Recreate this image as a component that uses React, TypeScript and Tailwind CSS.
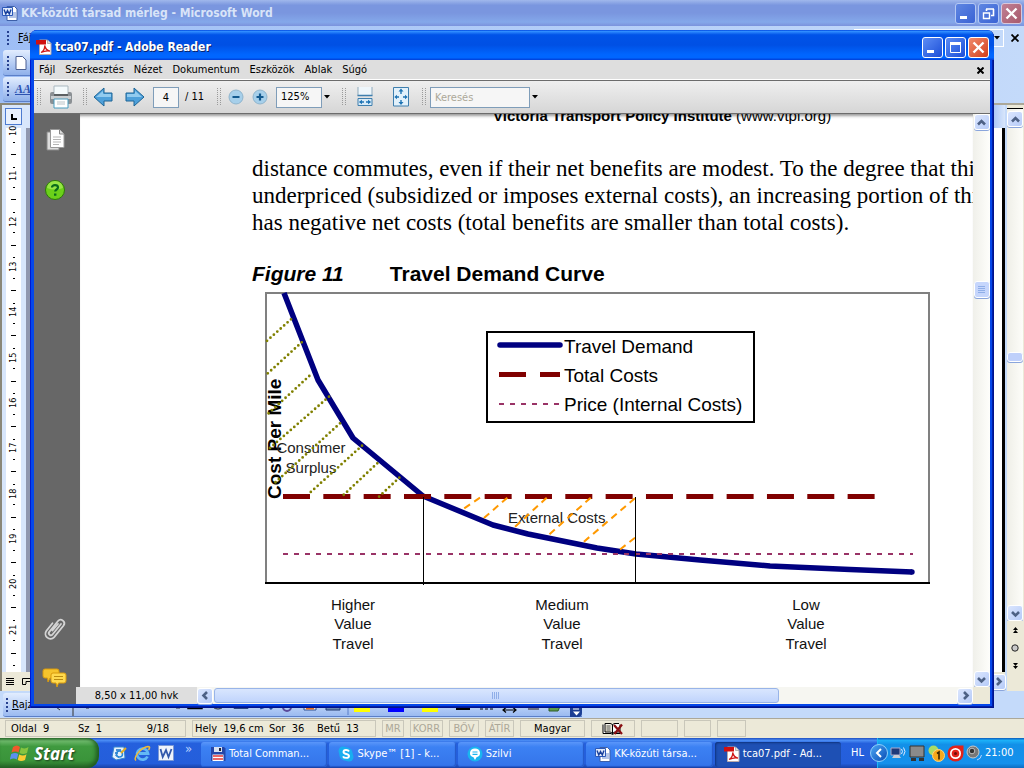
import React from "react";

const UI = "font-['DejaVu_Sans_Condensed','Liberation_Sans',sans-serif]";

type Dir = "up" | "down" | "left" | "right";

const chevrons: Record<Dir, string> = {
  up: "M4 9.5 7.5 6 11 9.5",
  down: "M4 6 7.5 9.5 11 6",
  left: "M9 4 5.5 7.5 9 11",
  right: "M6 4 9.5 7.5 6 11",
};

function ScrollButton({ dir, label }: { dir: Dir; label: string }) {
  return (
    <button
      aria-label={label}
      className="flex size-4 shrink-0 items-center justify-center rounded-[3px] border border-white bg-linear-to-br from-[#dbe6fe] to-[#b6cbf8] shadow-[0_1px_0_#8aa5dc]"
    >
      <svg viewBox="0 0 15 15" className="size-[15px] shrink-0" fill="none" stroke="#4d6185" strokeWidth="2.6">
        <path d={chevrons[dir]} />
      </svg>
    </button>
  );
}

function Grip() {
  return (
    <svg viewBox="0 0 4 18" className="h-[18px] w-1 shrink-0" stroke="#9a9a9a" strokeDasharray="1 1">
      <path d="M.5 0V18M3.5 0V18" />
    </svg>
  );
}

function Caret() {
  return (
    <svg viewBox="0 0 6 4" className="h-1 w-1.5">
      <path d="M0 0h6L3 3.5Z" fill="#000" />
    </svg>
  );
}

function CaptionButton({ kind, dim }: { kind: "min" | "max" | "restore" | "close"; dim?: boolean }) {
  const close = kind === "close";
  const tone = close
    ? dim
      ? "from-[#c08095] to-[#a85a6c] border-[#d8c8dc]"
      : "from-[#f08a6c] to-[#d23c12] border-white"
    : dim
      ? "from-[#5f86e2] to-[#3a62d4] border-[#b4c8f4]"
      : "from-[#5d8cf4] to-[#1c4cd8] border-white";
  const names = { min: "Minimize", max: "Maximize", restore: "Restore", close: "Close" };
  return (
    <button aria-label={names[kind]} className={`size-[21px] shrink-0 rounded-[3px] border bg-linear-to-br ${tone}`}>
      <svg viewBox="0 0 19 19" className="size-[19px]" fill="none" stroke="#fff">
        {kind === "min" && <path d="M4 13.5h7" strokeWidth="3" />}
        {kind === "max" && (
          <>
            <path d="M4.5 5.5h10v9h-10z" />
            <path d="M4 5.5h11" strokeWidth="3" />
          </>
        )}
        {kind === "restore" && (
          <>
            <path d="M7 5h8M14.5 5v6.5H12M7.5 5v2" strokeWidth="1.6" />
            <path d="M4.5 9h6v5.5h-6z" strokeWidth="1.4" />
          </>
        )}
        {close && <path d="M4.5 4.5l10 10M14.5 4.5l-10 10" strokeWidth="2.4" />}
      </svg>
    </button>
  );
}

function WordIcon() {
  return (
    <svg viewBox="0 0 16 16" className="size-4 shrink-0">
      <path d="M5 1.5h7.5l2.5 2.500V15.500H5z" fill="#fff" stroke="#3d5fa8" />
      <path d="M10 8h4M10 10h4M7 12h7" stroke="#6b8bd0" />
      <path d="M.5 2.500h10v8H.5z" fill="#dfe9fb" stroke="#2b58b8" />
      <path d="M2 4.500 3.800 9 5.500 5.500 7.300 9 9 4.500" fill="none" stroke="#173f9c" strokeWidth="1.400" />
    </svg>
  );
}

function PdfIcon() {
  return (
    <svg viewBox="0 0 16 16" className="size-4 shrink-0">
      <path d="M3.500 1h8L15 4.500V15.500H3.500z" fill="#fff" stroke="#b9a9a9" />
      <path d="M11.500 1v3.500H15" fill="#ddd" stroke="#999" strokeWidth=".7" />
      <path d="M0 1h10v4.500H0z" fill="#d01010" />
      <path d="M5 13.500c3-1.500 4-5 3.700-7 .6 3 3 5.300 5.300 5.600-3-.6-6 0-9 1.400Z" fill="none" stroke="#d01818" strokeWidth="1.300" />
    </svg>
  );
}

function AdobeToolbar() {
  return (
    <div className="flex h-[33px] items-center border-b border-[#6c6c6c] bg-linear-to-b from-[#efefef] to-[#d6d6d6] pl-[3px]">
      <Grip />
      <button aria-label="Nyomtatás" className="ml-2 w-6">
        <svg viewBox="0 0 24 24" className="size-6">
          <path d="M5 1h14v9H5z" fill="#f4fafc" stroke="#a9b7bf" />
          <path d="M1 9q0-2 2-2h2v3h14V7h2q2 0 2 2v8q0 2-2 2H3q-2 0-2-2z" fill="#8b9094" />
          <path d="M2 11h20v3H2z" fill="#c9cdd0" />
          <path d="M5 10h14" stroke="#5b6063" strokeWidth="2" />
          <path d="M5 14h14v9H5z" fill="#fff" stroke="#4b9cbf" />
          <path d="M8 17h8M8 19h8" stroke="#b9c2c6" />
        </svg>
      </button>
      <span className="w-2.5" />
      <Grip />
      <button aria-label="Előző oldal" className="ml-1.5 w-5">
        <svg viewBox="0 0 20 20" className="size-5">
          <path d="M1 10 11 1v5h8v8h-8v5z" fill="#4ea0da" stroke="#1d6496" />
          <path d="M3 10 10 4v3h8v3z" fill="#92cbef" />
        </svg>
      </button>
      <button aria-label="Következő oldal" className="ml-3 w-5">
        <svg viewBox="0 0 20 20" className="size-5">
          <path d="M19 10 9 1v5H1v8h8v5z" fill="#4ea0da" stroke="#1d6496" />
          <path d="M17 10 10 4v3H2v3z" fill="#92cbef" />
        </svg>
      </button>
      <input
        aria-label="Oldalszám"
        defaultValue="4"
        className="ml-2 h-[21px] w-[26px] border border-[#7f9db9] bg-[#f6f6f6] text-center"
      />
      <span className="ml-1.5 w-[26px] whitespace-pre">/ 11</span>
      <span className="w-1.5" />
      <Grip />
      <button aria-label="Kicsinyítés" className="ml-[7px] w-4">
        <svg viewBox="0 0 16 16" className="size-4">
          <circle cx="8" cy="8" r="7" fill="#a6cfea" stroke="#8fb4cc" />
          <path d="M4.500 8h7" stroke="#12598e" strokeWidth="2.200" />
        </svg>
      </button>
      <button aria-label="Nagyítás" className="ml-2 w-4">
        <svg viewBox="0 0 16 16" className="size-4">
          <circle cx="8" cy="8" r="7" fill="#a6cfea" stroke="#8fb4cc" />
          <path d="M4.500 8h7M8 4.500v7" stroke="#12598e" strokeWidth="2.200" />
        </svg>
      </button>
      <select
        aria-label="Nagyítás mértéke"
        className="ml-2 h-[21px] w-[46px] appearance-none border border-[#7f9db9] bg-[#f6f6f6] pl-1"
      >
        <option>125%</option>
      </select>
      <span className="ml-0.5 flex w-2"><Caret /></span>
      <span className="w-2.5" />
      <Grip />
      <button aria-label="Szélességhez igazítás" className="ml-2.5 w-[18px]">
        <svg viewBox="0 0 18 20" className="h-5 w-[18px]">
          <path d="M2 0v8.500h14V0" fill="#eef6fb" stroke="#8fa9bb" />
          <path d="M1.500 8.500h15" stroke="#3f7fae" strokeWidth="1.500" />
          <path d="M2 11.500h14v7H2z" fill="#d8ebf8" stroke="#3f7fae" />
          <path d="M4 15h4M10 15h4" stroke="#1f74b4" strokeWidth="1.400" />
          <path d="M2.800 15 6 12.700v4.600zM15.200 15 12 12.700v4.600z" fill="#1f74b4" />
        </svg>
      </button>
      <button aria-label="Teljes oldal" className="ml-[18px] w-[18px]">
        <svg viewBox="0 0 18 20" className="h-5 w-[18px]">
          <path d="M1.500.5h15v18.500h-15z" fill="#e2f1fb" stroke="#3f7fae" />
          <path d="M9 4v3M9 13v3M4 10h3M11 10h3" stroke="#1f74b4" strokeWidth="1.400" />
          <path d="M9 1.500 11.500 4.500h-5zM9 18l2.500-3h-5zM2.300 10 5 7.700v4.600zM15.700 10 13 7.700v4.600z" fill="#1f74b4" />
        </svg>
      </button>
      <span className="w-3" />
      <Grip />
      <input
        aria-label="Keresés"
        placeholder="Keresés"
        className="ml-1 h-[21px] w-[100px] border border-[#7f9db9] bg-[#f6f6f6] px-1 placeholder:text-[#aca899]"
      />
      <button aria-label="Keresési beállítások" className="ml-0.5"><Caret /></button>
    </div>
  );
}

const hatch = [
  [266, 341.7, 291, 319.3], [266, 375, 301.7, 342.3], [266, 415.7, 309.3, 376], [267.7, 450, 329, 396.7],
  [274.3, 483.3, 340, 423.3], [310, 492.7, 362, 445.7], [341.7, 496.7, 377.3, 463.3], [378.3, 497.3, 399.3, 477.7],
];
const external = [
  [461.7, 510, 480, 497.7], [481.7, 520, 507.3, 497.7], [512.7, 529, 546.7, 497.7], [546.7, 536.7, 590.7, 497.7],
  [582.7, 542.7, 635, 498.3], [619.3, 550, 635, 537.7],
];
const categories = [
  { x: 353, level: "Higher" },
  { x: 562, level: "Medium" },
  { x: 806, level: "Low" },
];

function DemandChart() {
  return (
    <svg
      viewBox="252 286 680 370"
      className="block h-[370px] w-[680px] font-['Liberation_Sans',Arial,sans-serif]"
      fill="none"
      role="img"
      aria-label="Travel Demand Curve"
    >
      <path d="M266 583V293H929V583" stroke="#808080" strokeWidth="2" />
      <g fill="#000">
        <text transform="translate(281 499) rotate(-90)" fontSize="19" fontWeight="700">Cost Per Mile</text>
        <g fontSize="15" fill="#222">
          <text x="311" y="453" textAnchor="middle">Consumer</text>
          <text x="311" y="473" textAnchor="middle">Surplus</text>
          <text x="508" y="523">External Costs</text>
        </g>
      </g>
      <path
        d="M284 293 318 380 353 438 423 496 493 525 528 534 597 548 636 554 700 560 770 566 850 569.500 912 572"
        stroke="#000080"
        strokeWidth="5.500"
        strokeLinejoin="round"
      />
      <circle cx="912" cy="572" r="2.700" fill="#000080" />
      <path d="M283 496.500H875" stroke="#800000" strokeWidth="5" strokeDasharray="27 13.330" />
      <path d="M283 554H913" stroke="#993366" strokeWidth="2" strokeDasharray="5 6" />
      <g stroke="#808000" strokeWidth="2.800" strokeLinecap="round" strokeDasharray="0 4.600">
        {hatch.map(([a, b, c, d]) => <path key={b} d={`M${c} ${d} ${a} ${b}`} />)}
      </g>
      <g stroke="#ff9900" strokeWidth="2" strokeDasharray="7 5">
        {external.map(([a, b, c, d]) => <path key={b} d={`M${c} ${d} ${a} ${b}`} />)}
      </g>
      <path d="M423.500 497V585M635.500 497V583" stroke="#000" />
      <path d="M265 583H930" stroke="#000" strokeWidth="2" />
      <path d="M487 332H754V422H487z" fill="#fff" stroke="#000" strokeWidth="2" />
      <path d="M500 345H560" stroke="#000080" strokeWidth="5.500" strokeLinecap="round" />
      <path d="M499 374.500H560" stroke="#800000" strokeWidth="5" strokeDasharray="27 14" />
      <path d="M499 404H559" stroke="#993366" strokeWidth="2" strokeDasharray="5 6" />
      <g fill="#000" fontSize="19">
        <text x="564" y="353">Travel Demand</text>
        <text x="564" y="382">Total Costs</text>
        <text x="564" y="411">Price (Internal Costs)</text>
      </g>
      <g fill="#111" fontSize="15" textAnchor="middle">
        {categories.map(({ x, level }) => (
          <g key={level}>
            <text x={x} y="610">{level}</text>
            <text x={x} y="629">Value</text>
            <text x={x} y="649">Travel</text>
          </g>
        ))}
      </g>
    </svg>
  );
}

function AdobeSidebar() {
  return (
    <nav className="flex w-[42px] shrink-0 flex-col items-center bg-[#676767] pt-3.5">
      <button aria-label="Oldalak" className="w-6">
        <svg viewBox="0 0 24 24" className="size-6">
          <path d="M4 4h12v18H4z" fill="#ddd" stroke="#888" />
          <path d="M7.500 1.500h9L21 6v13.500H7.500z" fill="#fff" stroke="#999" />
          <path d="M16.500 1.500V6H21" fill="#ddd" stroke="#888" />
          <path d="M10 9h8M10 11.500h8M10 14h8M10 16.500h6" stroke="#b5b5b5" />
        </svg>
      </button>
      <button aria-label="Súgó" className="mt-[26px] w-6">
        <svg viewBox="0 0 24 24" className="size-6">
          <circle cx="12" cy="12" r="9.500" fill="#6bd01a" stroke="#2c7a08" />
          <path d="M4 10a8 7 0 0 1 16 0q-8 3-16 0Z" fill="#a9ee58" opacity=".7" />
          <path d="M9 9.500q0-2.300 3-2.300t3 2.300c0 2-2.800 2-2.800 4" fill="none" stroke="#0a6a1c" strokeWidth="2.200" />
          <path d="M11 15.500h2.400v2.200H11z" fill="#0a6a1c" />
        </svg>
      </button>
      <div className="grow" />
      <button aria-label="Mellékletek" className="w-6">
        <svg viewBox="0 0 24 28" className="h-7 w-6" fill="none" stroke="#d4d4d4" strokeWidth="1.800" strokeLinecap="round">
          <path d="M18 9 9.500 19.500a2 2 0 0 1-3.200-2.600L15 6a3.600 3.600 0 0 1 5.600 4.500L11 22.300A5 5 0 0 1 3.300 16l6.200-7.800M9.500 15.500 15 9" />
        </svg>
      </button>
      <button aria-label="Megjegyzések" className="mt-6 mb-[15px] w-[26px]">
        <svg viewBox="0 0 26 22" className="h-[22px] w-[26px]" fill="#f6c42c" stroke="#d99a0c">
          <path d="M3 2h12q2 0 2 2v5q0 2-2 2H8l-2 4-.5-4H3q-2 0-2-2V4q0-2 2-2Z" />
          <path d="M11 6h11q2 0 2 2v6q0 2-2 2h-5.500L15 20l-1-4h-3q-2 0-2-2V8q0-2 2-2Z" fill="#ffd94e" />
          <path d="M12 9.500h9M12 12.500h9" stroke="#b98a10" />
        </svg>
      </button>
    </nav>
  );
}

function AdobeWindow() {
  const menu = ["Fájl", "Szerkesztés", "Nézet", "Dokumentum", "Eszközök", "Ablak", "Súgó"];
  return (
    <section className="absolute inset-x-[30px] top-[30px] bottom-[30px] flex flex-col overflow-hidden rounded-t-[7px] bg-[#0547ea] px-1 pb-1 shadow-[inset_1px_0_0_#0019cf,inset_-1px_-1px_0_#00138c,inset_-2px_-2px_0_#001ea8]">
      <header className="-mx-1 flex h-[30px] shrink-0 items-center gap-[3px] rounded-t-[7px] bg-[linear-gradient(180deg,#0048e0,#2f8cff_5%,#0053e8_16%,#0050e4_50%,#0066ff_82%,#0066ff_92%,#003dd7)] pr-[5px] pl-1.5 pt-1">
        <PdfIcon />
        <h1 className="grow text-[12px] font-bold text-white [text-shadow:1px_1px_#0a246a]">tca07.pdf - Adobe Reader</h1>
        <div className="flex gap-0.5">
          <CaptionButton kind="min" />
          <CaptionButton kind="max" />
          <CaptionButton kind="close" />
        </div>
      </header>
      <div className="flex h-[21px] shrink-0 items-center border-b border-[#6c6c6c] bg-[#dedede] pr-1.5 pl-[5px] shadow-[inset_0_-1px_0_#fff]">
        <nav className="flex grow gap-2.5">
          {menu.map((m) => <button key={m}>{m}</button>)}
        </nav>
        <button aria-label="Bezárás">
          <svg viewBox="0 0 7 7" className="size-[7px]" stroke="#000" strokeWidth="2"><path d="m.5.5 6 6M6.500.5l-6 6" /></svg>
        </button>
      </div>
      <AdobeToolbar />
      <div className="flex min-h-0 grow">
        <AdobeSidebar />
        <div className="flex min-w-0 grow flex-col">
          <div className="flex min-h-0 grow">
            <article className="min-w-0 grow overflow-hidden border-l-4 border-[#676767] bg-white pl-[172px] whitespace-nowrap text-black shadow-[inset_0_4px_3px_-2px_#999]">
              <p className="-mt-[7px] pl-[241px] font-['Liberation_Sans',Arial,sans-serif] text-[15px] leading-[17px]">
                <b>Victoria Transport Policy Institute</b> (www.vtpi.org)
              </p>
              <p className="mt-[31px] font-['Liberation_Serif','Times_New_Roman',serif] text-[23px] leading-[27px]">
                distance commutes, even if their net benefits are modest. To the degree that this travel is<br />
                underpriced (subsidized or imposes external costs), an increasing portion of this travel<br />
                has negative net costs (total benefits are smaller than total costs).
              </p>
              <h2 className="mt-[26px] flex gap-[46px] font-['Liberation_Sans',Arial,sans-serif] text-[21px] leading-6 font-bold">
                <i>Figure 11</i>
                <span>Travel Demand Curve</span>
              </h2>
              <DemandChart />
            </article>
            <div className="flex w-[17px] shrink-0 flex-col items-center bg-linear-to-r from-[#f0f0ea] to-[#fefefb]">
              <ScrollButton dir="up" label="Fel" />
              <div className="grow-[151]" />
              <div className="flex h-[17px] w-4 items-center justify-center rounded-[3px] border border-white bg-[#c6d6fc] shadow-[0_1px_0_#8aa5dc]">
                <svg viewBox="0 0 8 8" className="size-2" stroke="#8faee8"><path d="M0 .5h7M0 2.500h7M0 4.500h7M0 6.500h7" /></svg>
              </div>
              <div className="grow-[373]" />
              <ScrollButton dir="down" label="Le" />
            </div>
          </div>
          <div className="flex h-[17px] shrink-0 items-center bg-[#f6f6f1]">
            <div className="h-full w-[121px] shrink-0 bg-[#dedede] text-center leading-[17px]">8,50 x 11,00 hvk</div>
            <ScrollButton dir="left" label="Balra" />
            <div className="ml-px flex h-[15px] grow-[563] items-center justify-center rounded-[3px] border border-[#98b4e8] bg-linear-to-b from-[#d9e6fe] to-[#c0d4fc]">
              <svg viewBox="0 0 8 8" className="size-2" stroke="#8faee8"><path d="M.5 0v7M2.500 0v7M4.500 0v7M6.500 0v7" /></svg>
            </div>
            <div className="grow-[181]" />
            <ScrollButton dir="right" label="Jobbra" />
            <div className="h-full w-[17px] bg-[#ece9d8]" />
          </div>
        </div>
      </div>
    </section>
  );
}

function WordRuler() {
  const numbers = [10, 11, 12, 13, 14, 15, 16, 17, 18, 19, 20, 21];
  return (
    <div className="flex w-[30px] shrink-0 flex-col border-t-2 border-l-2 border-[#8a8778] bg-[#d8e6fb]">
      <div className="flex h-[23px] shrink-0 items-center pl-[3px]">
        <div className="flex size-[17px] items-center justify-center border border-[#4d7bd0] bg-[#eaf1fd]">
          <svg viewBox="0 0 8 8" className="size-2" stroke="#000" strokeWidth="2" fill="none"><path d="M2 1v5h5" /></svg>
        </div>
      </div>
      <div className="flex min-h-0 grow">
        <div className="ml-1 flex w-[15px] flex-col bg-white">
          {numbers.map((n) => (
            <div key={n} className="flex grow flex-col items-center">
              <span className="flex h-2 rotate-180 items-center text-[9px] leading-none [writing-mode:vertical-rl]">{n}</span>
              <i className="my-auto h-px w-0.5 bg-black" />
              <i className="my-auto h-px w-[5px] bg-black" />
              <i className="my-auto h-px w-0.5 bg-black" />
            </div>
          ))}
        </div>
        <div className="ml-[5px] w-1 bg-[#9097ae]" />
      </div>
      <div className="flex h-[19px] shrink-0 items-center gap-2 overflow-hidden bg-[#ece9d8] pl-1">
        <svg viewBox="0 0 8 8" className="size-2 shrink-0" stroke="#000"><path d="M0 .5h8M0 2.500h8M0 4.500h8M0 6.500h8" /></svg>
        <svg viewBox="0 0 10 8" className="h-2 w-2.5 shrink-0" fill="none" stroke="#000"><path d="M8 .5H.5v6H4M4 6V3.500h5" /></svg>
      </div>
    </div>
  );
}

function WordRightEdge() {
  return (
    <div className="flex w-[34px] shrink-0 border-t-2 border-[#aca899]">
      <div className="flex w-[15px] flex-col">
        <div className="h-[23px] bg-linear-to-r from-[#9ebef5] to-[#d8e6fb]" />
        <div className="grow border-r-[3px] border-black bg-white" />
        <div className="flex h-[19px] items-center bg-[#ece9d8]"><ScrollButton dir="right" label="Jobbra" /></div>
      </div>
      <div className="ml-0.5 flex grow flex-col items-center bg-linear-to-r from-[#efefe8] to-[#fdfdf9]">
        <div className="mb-0.5 h-1 w-4 border-b border-black bg-[#ece9d8]" />
        <ScrollButton dir="up" label="Fel" />
        <div className="grow-[225]" />
        <div className="h-[10px] w-4 rounded-[3px] border border-white bg-[#bfd0fb] shadow-[0_1px_0_#8aa5dc]" />
        <div className="grow-[243]" />
        <ScrollButton dir="down" label="Le" />
        <div className="flex h-[70px] w-full flex-col items-center gap-2.5 bg-[#ece9d8] pt-1.5">
          <svg viewBox="0 0 7 7" className="size-[7px]"><path d="M3.500 0 6 3H1zM3.500 3 6 6H1z" /></svg>
          <svg viewBox="0 0 8 8" className="size-2"><circle cx="4" cy="4" r="3.200" fill="#c9c9c9" stroke="#222" /></svg>
          <svg viewBox="0 0 7 7" className="size-[7px]"><path d="M3.500 4 6 1H1zM3.500 7 6 4H1z" /></svg>
        </div>
      </div>
      <div className="w-0.5 bg-[#ece9d8]" />
    </div>
  );
}

function DotHandle() {
  return (
    <svg viewBox="0 0 3 14" className="h-3.5 w-[3px] shrink-0" fill="#27418f">
      <path d="M0 0h2v2H0zM0 4h2v2H0zM0 8h2v2H0zM0 12h2v2H0z" />
    </svg>
  );
}

function StatusCell({ width, children, muted }: { width: string; children?: React.ReactNode; muted?: boolean }) {
  return (
    <div className={`flex h-[17px] shrink-0 items-center justify-center border border-[#c9c7ba] ${width} ${muted ? "text-[#aca899]" : ""}`}>
      {children}
    </div>
  );
}

function WordWindow() {
  return (
    <section className="relative flex min-h-0 grow flex-col bg-[#c4dafa]">
      <header className="flex h-[26px] shrink-0 items-center gap-[3px] bg-[linear-gradient(180deg,#a0b8ec,#7a96df_20%,#7a96df_50%,#84a8ea_85%,#7b92dc)] pr-0.5 pl-0.5">
        <WordIcon />
        <h1 className="grow text-[12px] font-bold text-[#d8e4f8]">KK-közúti társad mérleg - Microsoft Word</h1>
        <div className="flex gap-0.5">
          <CaptionButton kind="min" dim />
          <CaptionButton kind="restore" dim />
          <CaptionButton kind="close" dim />
        </div>
      </header>
      <div className="flex h-6 shrink-0 items-center bg-linear-to-r from-[#9ebef5] to-[#c4dafa] pr-[5px] pl-[7px]">
        <DotHandle />
        <button className="ml-2"><u>F</u>ájl</button>
        <div className="grow" />
        <div className="mr-[7px] flex h-[18px] w-[150px] items-center justify-end border border-white bg-[#c4dafa] pr-[3px]"><Caret /></div>
        <svg viewBox="0 0 8 8" className="size-2" stroke="#000" strokeWidth="1.800"><path d="m.5.5 7 7M7.500.5l-7 7" /></svg>
      </div>
      <div className="flex h-[53px] shrink-0 flex-col gap-px bg-linear-to-r from-[#9ebef5] to-[#c4dafa] pl-[3px]">
        <div className="flex h-[26px] w-3/4 items-center gap-[5px] rounded-l-[3px] border-b border-[#5b7fc8] bg-linear-to-b from-[#e2edfe] to-[#8fb0ea] pl-1">
          <DotHandle />
          <svg viewBox="0 0 12 14" className="h-3.5 w-3"><path d="M1 .5h6.500L11 4v9.500H1z" fill="#fff" stroke="#4b5f92" /></svg>
        </div>
        <div className="flex h-[25px] w-3/4 items-center gap-[5px] rounded-l-[3px] border-b border-[#5b7fc8] bg-linear-to-b from-[#e2edfe] to-[#8fb0ea] pl-1">
          <DotHandle />
          <span className="font-['Liberation_Serif',serif] text-[12px] font-bold text-[#2c52b0] italic underline">AA</span>
        </div>
      </div>
      <div className="flex min-h-0 grow">
        <WordRuler />
        <div className="grow bg-[#9097ae]" />
        <WordRightEdge />
      </div>
      <div className="h-7 shrink-0 border-b border-[#aca899] pt-0.5 pl-[3px]">
        <div className="flex h-[24px] w-[579px] items-center rounded-l-[3px] border-b border-[#5b7fc8] bg-linear-to-b from-[#e2edfe] to-[#9bbaf0] pl-[3px]">
          <DotHandle />
          <span className="ml-[3px] w-9"><u>R</u>ajz</span>
          <svg viewBox="48 0 534 24" className="h-6 w-[534px] shrink-0" fill="none">
            <path d="M56 14l4 3M73 10v13M86 15h3M152 14h3M176 15h4" stroke="#333" />
            <path d="M188 4h14v11.500h-14z" stroke="#000" strokeWidth="1.500" />
            <ellipse cx="218" cy="10" rx="7" ry="6" stroke="#222" />
            <path d="M234 4h14v11.500h-14z" stroke="#2b4680" />
            <path d="M260 15l8-3 4 4" stroke="#1d49a0" strokeWidth="3" />
            <circle cx="287" cy="14" r="4" stroke="#5a4a9a" strokeWidth="2" />
            <path d="M304 4h12v13h-12z" fill="#e8e8f4" stroke="#305090" />
            <path d="M306 15h8" stroke="#e87020" strokeWidth="3" />
            <path d="M326 4h14v13h-14z" fill="#6a86b0" stroke="#223a70" />
            <path d="M348 2v20" stroke="#5b7fc8" />
            <path d="M354 15.500h16M422 15.500h16" stroke="#ff0" strokeWidth="7" />
            <path d="M388 15.500h16" stroke="#00f" strokeWidth="7" />
            <path d="M456 16h14" stroke="#000" strokeWidth="2" />
            <path d="M480 16h14" stroke="#000" strokeDasharray="3 2" />
            <path d="M503 17h13M506 14.500 503 17l3 2.500M513 14.500l3 2.500-3 2.500" stroke="#000" strokeWidth="1.200" />
            <path d="M528 15h11" stroke="#6d7288" strokeWidth="4" />
            <path d="M549 11h12l-3 7h-9z" fill="#5f9c4c" stroke="#2d5c28" />
            <path d="M570 0h8q4 0 4 4v16q0 4-4 4h-8z" fill="#1d3f94" />
            <path d="M573 16h6" stroke="#fff" />
            <path d="M573 18.500h7l-3.500 4z" fill="#fff" />
          </svg>
        </div>
      </div>
      <footer className="flex h-[19px] shrink-0 items-center gap-1.5 bg-[#ece9d8] pl-[5px]">
        <div className="flex h-[17px] w-[181px] shrink-0 items-center border border-[#c9c7ba] px-[5px] whitespace-pre">
          <span className="w-[67px]">Oldal  9</span>
          <span className="grow">Sz  1</span>
          <span className="mr-[11px]">9/18</span>
        </div>
        <div className="flex h-[17px] w-[184px] shrink-0 items-center gap-2 border border-[#c9c7ba] pl-0.5 whitespace-pre">
          <span className="w-[66px]">Hely  19,6 cm</span>
          <span className="w-10">Sor  36</span>
          <span>Betű  13</span>
        </div>
        <StatusCell width="w-[22px]" muted>MR</StatusCell>
        <StatusCell width="w-[33px]" muted>KORR</StatusCell>
        <StatusCell width="w-[30px]" muted>BŐV</StatusCell>
        <StatusCell width="w-[29px]" muted>ÁTÍR</StatusCell>
        <StatusCell width="w-[65px]">Magyar</StatusCell>
        <StatusCell width="w-[44px]">
          <svg viewBox="0 0 22 14" className="h-3.5 w-[22px]" fill="none">
            <path d="M1 2.500v9h8l1.500 1 1.500-1h6v-9M3 1.500h5q2 0 2.500 1.500v8.500Q9.500 10 8 10H3zM17 1.500h-4q-2 0-2.500 1.500v8.500q1-1.500 2.500-1.500h4" fill="#fff" stroke="#000" />
            <path d="M4.500 4h4M4.500 6h4M4.500 8h4" stroke="#555" />
            <path d="m12 3 8 9M20 2.500 12.500 12" stroke="#8b0f12" strokeWidth="2.200" />
          </svg>
        </StatusCell>
        <StatusCell width="w-[37px]" />
        <StatusCell width="w-[27px]" />
        <StatusCell width="w-[29px]" />
      </footer>
      <AdobeWindow />
    </section>
  );
}

function TaskButton({ icon, label, active }: { icon: React.ReactNode; label: string; active?: boolean }) {
  return (
    <button
      className={`flex h-[25px] min-w-0 flex-1 items-center gap-[3px] rounded-[3px] pl-[9px] text-left whitespace-nowrap text-white ${
        active
          ? "bg-[#1e50b4] shadow-[inset_1px_1px_2px_#0f337e]"
          : "bg-linear-to-b from-[#5a96fa] via-[#3c81f3] via-20% to-[#3474ea] shadow-[inset_-1px_-1px_1px_#2458c8]"
      }`}
    >
      {icon}
      <span>{label}</span>
    </button>
  );
}

function Taskbar() {
  return (
    <footer className="flex h-[30px] shrink-0 items-center bg-[linear-gradient(180deg,#1f4fc0,#4a8cf4_8%,#2560dd_18%,#245edb_85%,#1941a5)]">
      <button className="flex h-full w-[99px] shrink-0 items-center gap-1 rounded-r-[12px] bg-[linear-gradient(180deg,#2f6f2f,#6cb86a_10%,#3f9a3f_28%,#3a943a_75%,#2a6b2a)] pl-2.5 shadow-[inset_-3px_-1px_4px_#1f5a20]">
        <svg viewBox="0 0 20 18" className="h-[18px] w-5">
          <path d="M3 3q4-3 7 0L8.500 8.500q-3-2-7 0z" fill="#f0592b" />
          <path d="M11 3.500q4 2 7.500-.5L17 9q-4 2-7.500 0z" fill="#86c440" />
          <path d="M1.200 10q4-2 7 0L6.800 15.500q-3-2-7 0z" fill="#5b90f0" />
          <path d="M9.200 10.500q4 2 7.300-.3L15 16q-4 2-7.300 0z" fill="#fbcb33" />
        </svg>
        <span className="font-['Open_Sans','Liberation_Sans',sans-serif] text-[17px] leading-none font-bold text-white italic [text-shadow:1px_1px_2px_#1a3a1a]">Start</span>
      </button>
      <div className="flex w-[102px] shrink-0 items-center gap-[7px] pl-3">
        <svg viewBox="0 0 16 16" className="size-4">
          <path d="M3 2h10l1 11-9 2-4-3z" fill="#e6f2fc" stroke="#3585cf" />
          <path d="M5 5h5M4 8h3M8 12.500 4.500 10" stroke="#1b6fc0" strokeWidth="1.300" />
          <circle cx="8.500" cy="9" r="3" fill="none" stroke="#2b8ad8" strokeWidth="1.500" />
          <path d="m10 8 5-5" stroke="#e5ad22" strokeWidth="2" />
        </svg>
        <svg viewBox="0 0 17 17" className="size-[17px]" fill="none">
          <path d="M13.500 11.500A5.500 5.500 0 1 1 14 8.500H5" stroke="#63b8f5" strokeWidth="2.800" />
          <path d="M2 15.500C-1 13 6 3 14 1.500c2.500 0 1.500 2 .5 3.500" stroke="#f3ba35" strokeWidth="1.500" />
        </svg>
        <svg viewBox="0 0 16 16" className="size-4">
          <path d="M.5.500h15v15H.5z" fill="#eef3fc" stroke="#7d9ad4" />
          <path d="m2.500 4 2.200 8L8 5l2.500 7L13.500 4" fill="none" stroke="#3157ab" strokeWidth="1.800" />
        </svg>
        <span className="-mt-2.5 ml-1 text-[13px] leading-none text-[#b9d2ff]">»</span>
      </div>
      <div className="flex min-w-0 grow gap-0.5 pt-0.5">
        <TaskButton
          label="Total Comman..."
          icon={
            <svg viewBox="0 0 16 16" className="size-4 shrink-0">
              <path d="M1 1h13l1.500 1.500V15H1z" fill="#2446a8" />
              <path d="M4 1h8v5H4z" fill="#d9e2f2" />
              <path d="M9 2h2v3H9z" fill="#223" />
              <path d="M2.500 8.500h11V15h-11z" fill="#fff" />
              <path d="M3 10h10M3 13h10" stroke="#e23636" strokeWidth="1.500" />
            </svg>
          }
        />
        <TaskButton
          label="Skype™ [1] - k..."
          icon={
            <svg viewBox="0 0 16 16" className="size-4 shrink-0">
              <circle cx="5" cy="5" r="4.500" fill="#18aef0" /><circle cx="11" cy="11" r="4.500" fill="#18aef0" /><circle cx="8" cy="8" r="6.800" fill="#18aef0" />
              <path d="M11 5.500C10 3.500 5.500 3.500 5.500 6S11 7.500 11 10s-5 2.500-6 .3" fill="none" stroke="#fff" strokeWidth="1.900" />
            </svg>
          }
        />
        <TaskButton
          label="Szilvi"
          icon={
            <svg viewBox="0 0 16 16" className="size-4 shrink-0">
              <circle cx="8" cy="8" r="7.500" fill="#19b5ef" />
              <path d="M8 2.500a5 4.500 0 0 1 1.500 8.800L8 14l-1.500-2.700A5 4.500 0 0 1 8 2.500Z" fill="#fff" />
              <path d="M5.500 6h5M5.500 8.300h5" stroke="#19b5ef" strokeWidth="1.200" />
            </svg>
          }
        />
        <TaskButton label="KK-közúti társa..." icon={<WordIcon />} />
        <TaskButton label="tca07.pdf - Ad..." icon={<PdfIcon />} active />
      </div>
      <span className="w-9 shrink-0 pl-2.5 text-white">HL</span>
      <div className="flex h-full w-[147px] shrink-0 items-center gap-0.5 border-l border-[#1bb8f4] bg-[linear-gradient(180deg,#0c59b9,#1cb0f8_8%,#1290e8_22%,#1490ec_85%,#0d6cc0)] pr-3 text-white">
        <button aria-label="Rejtett ikonok" className="-ml-2 flex size-[18px] shrink-0 items-center justify-center rounded-full border border-[#8fd0fa] bg-linear-to-br from-[#4ba6f4] to-[#0a4cb4]">
          <svg viewBox="0 0 8 10" className="h-2.5 w-2" fill="none" stroke="#fff" strokeWidth="2"><path d="M6 1 2 5l4 4" /></svg>
        </button>
        <svg viewBox="0 0 17 17" className="size-[17px] shrink-0">
          <path d="M1 3h9v7H1z" fill="#1e3a7a" stroke="#aac" /><path d="M2 13h9l-2-3H4z" fill="#c9ccd4" />
          <path d="M11.500 4q2 2.500 0 5M13.500 2.500q3 4 0 8" fill="none" stroke="#dfe8ff" />
        </svg>
        <svg viewBox="0 0 17 17" className="size-[17px] shrink-0">
          <path d="M1 1h14v11H1z" fill="#8a8a8a" stroke="#333" /><path d="M2 14.500h5M10 14.500h5" stroke="#333" strokeWidth="3" />
        </svg>
        <svg viewBox="0 0 17 17" className="size-[17px] shrink-0">
          <circle cx="5.500" cy="5.500" r="5" fill="#a9dc64" /><circle cx="10.500" cy="10.500" r="6" fill="#f7a81c" stroke="#ffd67a" />
          <path d="M9 8.500 11 7v7.500" fill="none" stroke="#3a2400" strokeWidth="1.600" />
        </svg>
        <svg viewBox="0 0 17 17" className="size-[17px] shrink-0">
          <path d="M8.500.5h8v8a8 8 0 1 1-8-8Z" fill="#e2231a" /><circle cx="8.500" cy="8.500" r="5.500" fill="#fff" /><circle cx="8.500" cy="8.500" r="3.800" fill="#e2231a" /><circle cx="8.500" cy="8.500" r="1.500" fill="#6d0c08" />
        </svg>
        <svg viewBox="0 0 17 17" className="size-[17px] shrink-0">
          <circle cx="7" cy="7" r="6" fill="#777" stroke="#c9c9c9" /><circle cx="6" cy="6" r="2.800" fill="#333" stroke="#bbb" />
          <path d="M11 15q4-1 4.500-5" fill="none" stroke="#b9d6ff" />
        </svg>
        <time className="grow text-right">21:00</time>
      </div>
    </footer>
  );
}

export default function App() {
  return (
    <main className={`flex h-screen flex-col overflow-hidden text-[11px] leading-4 text-black ${UI}`}>
      <WordWindow />
      <Taskbar />
    </main>
  );
}
